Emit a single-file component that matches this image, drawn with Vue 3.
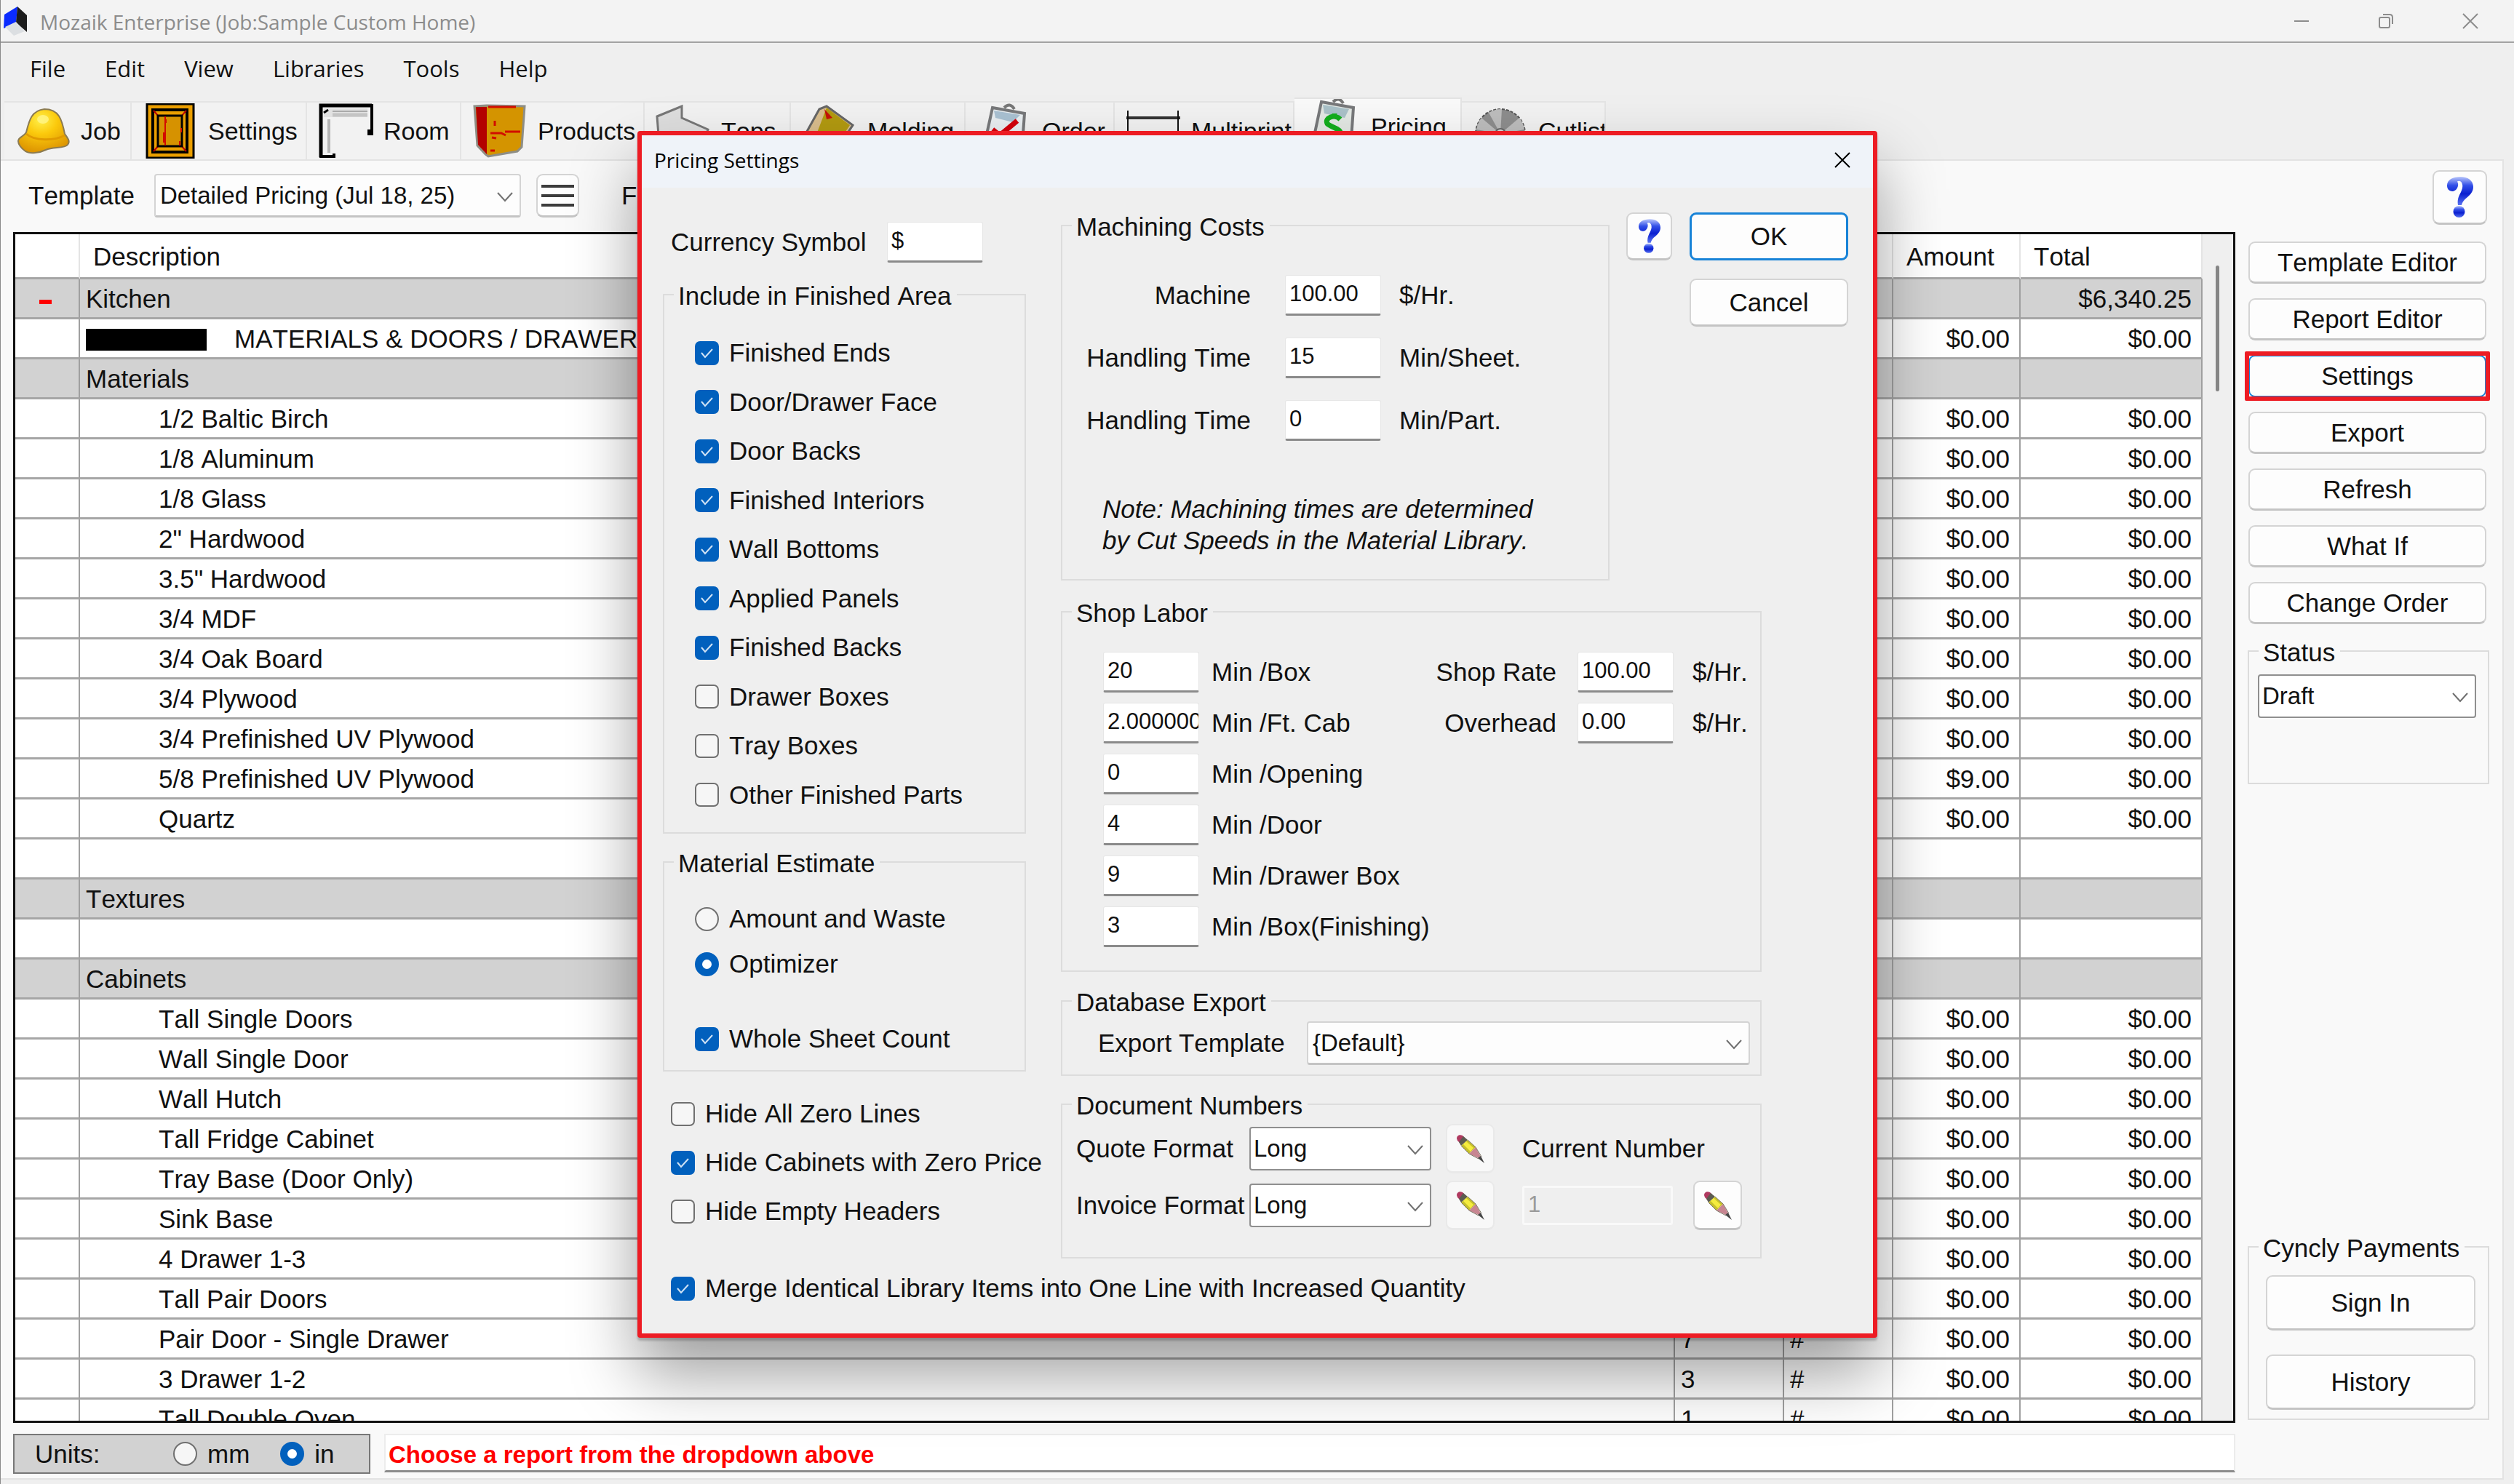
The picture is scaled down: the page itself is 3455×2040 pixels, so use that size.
<script setup>
import { ref } from 'vue'

const menus = ['File', 'Edit', 'View', 'Libraries', 'Tools', 'Help']

const tabs = [
  { id: 'job', label: 'Job', w: 175 },
  { id: 'settings', label: 'Settings', w: 241 },
  { id: 'room', label: 'Room', w: 212 },
  { id: 'products', label: 'Products', w: 252 },
  { id: 'tops', label: 'Tops', w: 201 },
  { id: 'molding', label: 'Molding', w: 240 },
  { id: 'order', label: 'Order', w: 205 },
  { id: 'multiprint', label: 'Multiprint', w: 247 },
  { id: 'pricing', label: 'Pricing', w: 230, active: true },
  { id: 'cutlist', label: 'Cutlist', w: 198 },
]

const zero = '$0.00'
const item = (text, more = {}) => ({ text, indent: true, amount: zero, total: zero, ...more })
const group = (text, more = {}) => ({ text, group: true, ...more })
const rows = [
  group('Kitchen', { mark: true, total: '$6,340.25' }),
  { text: 'MATERIALS & DOORS / DRAWERS', swatch: true, amount: zero, total: zero },
  group('Materials'),
  item('1/2 Baltic Birch'),
  item('1/8 Aluminum'),
  item('1/8 Glass'),
  item('2" Hardwood'),
  item('3.5" Hardwood'),
  item('3/4 MDF'),
  item('3/4 Oak Board'),
  item('3/4 Plywood'),
  item('3/4 Prefinished UV Plywood'),
  item('5/8 Prefinished UV Plywood', { amount: '$9.00' }),
  item('Quartz'),
  {},
  group('Textures'),
  {},
  group('Cabinets'),
  item('Tall Single Doors'),
  item('Wall Single Door'),
  item('Wall Hutch'),
  item('Tall Fridge Cabinet'),
  item('Tray Base (Door Only)'),
  item('Sink Base'),
  item('4 Drawer 1-3'),
  item('Tall Pair Doors'),
  item('Pair Door - Single Drawer', { qty: '7', unit: '#' }),
  item('3 Drawer 1-2', { qty: '3', unit: '#' }),
  item('Tall Double Oven', { qty: '1', unit: '#' }),
]

const sideButtons = ['Template Editor', 'Report Editor', 'Settings', 'Export', 'Refresh', 'What If', 'Change Order']

const finished = ref([
  { label: 'Finished Ends', on: true },
  { label: 'Door/Drawer Face', on: true },
  { label: 'Door Backs', on: true },
  { label: 'Finished Interiors', on: true },
  { label: 'Wall Bottoms', on: true },
  { label: 'Applied Panels', on: true },
  { label: 'Finished Backs', on: true },
  { label: 'Drawer Boxes', on: false },
  { label: 'Tray Boxes', on: false },
  { label: 'Other Finished Parts', on: false },
])
const hides = ref([
  { label: 'Hide All Zero Lines', on: false },
  { label: 'Hide Cabinets with Zero Price', on: true },
  { label: 'Hide Empty Headers', on: false },
])
const estimate = ref('optimizer')
const wholeSheet = ref(true)
const merge = ref(true)
const units = ref('in')
const currency = ref('$')

const machining = ref([
  { id: 'machine', label: 'Machine', value: '100.00', unit: '$/Hr.' },
  { id: 'sheet', label: 'Handling Time', value: '15', unit: 'Min/Sheet.' },
  { id: 'part', label: 'Handling Time', value: '0', unit: 'Min/Part.' },
])
const labor = ref([
  { id: 'box', label: 'Min /Box', value: '20' },
  { id: 'cab', label: 'Min /Ft. Cab', value: '2.000000' },
  { id: 'opening', label: 'Min /Opening', value: '0' },
  { id: 'door', label: 'Min /Door', value: '4' },
  { id: 'drawer', label: 'Min /Drawer Box', value: '9' },
  { id: 'finishing', label: 'Min /Box(Finishing)', value: '3' },
])
const rates = ref([
  { id: 'rate', label: 'Shop Rate', value: '100.00' },
  { id: 'overhead', label: 'Overhead', value: '0.00' },
])
</script>

<template>
  <div class="window">
    <svg width="0" height="0" class="defs" aria-hidden="true">
      <defs>
        <linearGradient id="blue" x1="0" y1="0" x2="0" y2="1">
          <stop offset="0" stop-color="#b9c6fb" />
          <stop offset="0.3" stop-color="#3350e8" />
          <stop offset="0.6" stop-color="#0a1fd0" />
          <stop offset="1" stop-color="#5a74f2" />
        </linearGradient>
        <radialGradient id="hat" cx="0.45" cy="0.25" r="0.8">
          <stop offset="0" stop-color="#fff04a" />
          <stop offset="0.4" stop-color="#fbc90c" />
          <stop offset="1" stop-color="#d98e00" />
        </radialGradient>
        <symbol id="question" viewBox="0 0 36 56">
          <path
            d="M8 20C2 20 0 16 0 12C0 4 8 0 18.500 0C29 0 36 5.500 36 14C36 20 32.500 24 28 28C23 32 21 35 20 39H15C14 33 15 29 17.500 24C20 19 22 15 21 10.500C20 6 16.500 5 14 6.500C17 11 14 19 8 20Z"
            fill="url(#blue)"
          />
          <circle cx="16.500" cy="48" r="8" fill="url(#blue)" />
        </symbol>
        <symbol id="pencil" viewBox="0 0 40 40">
          <path d="M1 6C1 2 5 0 9 2L12 5L5 12L2 9Z" fill="#b03a60" />
          <path d="M10 3L16 8L7 16L4 11Z" fill="#5c5b50" />
          <path d="M16 8L27 18L18 27L7 16Z" fill="#c5c02c" />
          <path d="M14 10L24 19L20 24L10 14Z" fill="#f5ec3e" />
          <path d="M27 18L34 31L31 33L18 27Z" fill="#c78591" />
          <path d="M34 30L39 40L30 33Z" fill="#454545" />
          <path d="M7 16L18 27L31 34M16 8L27 18L35 31" fill="none" stroke="#7b7464" stroke-width="1" />
        </symbol>
        <symbol id="chevron" viewBox="0 0 22 14">
          <path d="M1 1L11 12L21 1" fill="none" stroke="#707070" stroke-width="2" />
        </symbol>
      </defs>
    </svg>

    <header class="titlebar">
      <svg class="logo" viewBox="0 0 34 40">
        <path d="M2 11L20 0L18 24L1 30Z" fill="#0a2bff" />
        <path d="M20 0L33 12V35L18 22Z" fill="#1c1c1c" />
        <path d="M3 28L18 21L30 34L15 40Z" fill="#dcdfe2" />
      </svg>
      <span class="app-title">Mozaik Enterprise (Job:Sample Custom Home)</span>
      <div class="caption-buttons">
        <button aria-label="Minimize"><svg viewBox="0 0 20 20"><path d="M0 10H20" /></svg></button>
        <button aria-label="Restore">
          <svg viewBox="0 0 20 20"><rect x="1" y="5" width="14" height="14" rx="2" /><path d="M6 1H15Q19 1 19 5V14" /></svg>
        </button>
        <button aria-label="Close"><svg viewBox="0 0 20 20"><path d="M0 0L20 20M20 0L0 20" /></svg></button>
      </div>
    </header>

    <nav class="menubar">
      <button v-for="m in menus" :key="m">{{ m }}</button>
    </nav>

    <nav class="tabs">
      <button v-for="t in tabs" :key="t.id" :class="['tab', { active: t.active }]" :style="{ width: t.w + 'px' }">
        <svg v-if="t.id === 'job'" class="tab-icon" viewBox="0 0 76 76">
          <path d="M4 52C4 46 12 46 15 40C19 24 22 10 40 8C60 8 64 22 68 42C72 48 76 52 72 57C68 62 52 60 42 64C34 68 20 70 14 66C8 62 4 56 4 52Z" fill="url(#hat)" stroke="#8b7b52" stroke-width="2" />
          <path d="M15 42C26 52 54 52 68 44" fill="none" stroke="#e09a00" stroke-width="3" />
          <ellipse cx="38" cy="22" rx="8" ry="6" fill="#fff58a" opacity="0.8" />
        </svg>
        <svg v-else-if="t.id === 'settings'" class="tab-icon" viewBox="0 0 76 76">
          <rect x="6" y="1" width="64" height="74" fill="#eb9f00" stroke="#000" stroke-width="3" />
          <rect x="14" y="9" width="47" height="58" fill="#eb9f00" stroke="#000" stroke-width="4" />
          <path d="M15 10L22 18M60 10L53 18M15 66L22 58M60 66L53 58" stroke="#b00" stroke-width="2" />
          <rect x="21" y="17" width="33" height="42" fill="#d69200" stroke="#000" stroke-width="3" />
          <path d="M31 18V58M32 22V27M29 40V54M53 34V40M51 52V58" stroke="#d30b00" stroke-width="2" />
        </svg>
        <svg v-else-if="t.id === 'room'" class="tab-icon" viewBox="0 0 76 76">
          <path d="M4 74V3H74" fill="none" stroke="#000" stroke-width="5" />
          <path d="M74 1V42H70V36M2 73H22V69" fill="none" stroke="#000" stroke-width="4" />
          <rect x="8" y="7" width="60" height="12" fill="#e2e2e2" />
          <path d="M20 11H68" stroke="#aaa" stroke-width="2" />
          <path d="M20 16H68" stroke="#c4c4c4" stroke-width="5" />
          <path d="M15 22V68" stroke="#b5b5b5" stroke-width="4" />
          <path d="M8 13L14 9" stroke="#000" stroke-width="3" />
        </svg>
        <svg v-else-if="t.id === 'products'" class="tab-icon" viewBox="0 0 76 76">
          <path d="M3 4L20 3L72 4L68 60L62 66L22 73L18 70L7 58Z" fill="#d49400" stroke="#8e8e86" stroke-width="3" />
          <path d="M5 5H20V70L8 57Z" fill="#b30000" />
          <path d="M22 5H60M31 24V31M25 41H40L46 44M45 39H66M27 47L33 48M25 65H31" fill="none" stroke="#d10d00" stroke-width="3" />
        </svg>
        <svg v-else-if="t.id === 'tops'" class="tab-icon" viewBox="0 0 76 76">
          <path d="M2 18L36 4V20L72 36L68 50L30 66L4 44Z" fill="#dedede" stroke="#777" stroke-width="3" />
        </svg>
        <svg v-else-if="t.id === 'molding'" class="tab-icon" viewBox="0 0 76 76">
          <path d="M4 44L24 8L34 4L70 30L50 60L4 60Z" fill="#d9bd8d" stroke="#666" stroke-width="3" />
          <path d="M34 6L66 30L54 48H18Z" fill="#b29a10" />
          <path d="M31 8L42 20L34 22Z" fill="#c51208" />
        </svg>
        <svg v-else-if="t.id === 'order'" class="tab-icon" viewBox="0 0 76 76">
          <path d="M22 6L66 14L62 70H8Z" fill="#e9eef1" stroke="#77787a" stroke-width="4" />
          <path d="M24 10L60 16L50 26L26 20Z" fill="#a9c1d2" />
          <path d="M38 6Q46 -2 52 8" fill="none" stroke="#777" stroke-width="4" />
          <path d="M22 36L32 44L56 24" fill="none" stroke="#d3000b" stroke-width="7" />
        </svg>
        <svg v-else-if="t.id === 'multiprint'" class="tab-icon" viewBox="0 0 76 76">
          <path d="M1 20H75" stroke="#333" stroke-width="4" />
          <path d="M3 10V70M72 10V70" stroke="#111" stroke-width="2" />
        </svg>
        <svg v-else-if="t.id === 'pricing'" class="tab-icon" viewBox="0 0 76 76">
          <path d="M22 4L66 12L62 70H8Z" fill="#e3e8e4" stroke="#77787a" stroke-width="4" />
          <path d="M24 8L60 14L54 26L26 20Z" fill="#a9c1c8" />
          <path d="M38 4Q46 -4 52 6" fill="none" stroke="#777" stroke-width="4" />
          <path d="M48 28C40 20 26 26 30 34C36 40 52 40 48 52M40 20V26" fill="none" stroke="#12ad1c" stroke-width="7" />
        </svg>
        <svg v-else class="tab-icon" viewBox="0 0 76 76">
          <circle cx="38" cy="42" r="34" fill="#8d8d8d" stroke="#555" stroke-width="2" stroke-dasharray="4 2" />
          <path d="M38 42L22 13A34 34 0 0 1 40 8ZM38 42L64 20A34 34 0 0 1 71 36ZM38 42L5 36A34 34 0 0 1 12 20Z" fill="#bdbdbd" />
          <circle cx="38" cy="42" r="7" fill="#ddd" stroke="#666" stroke-width="2" />
        </svg>
        <span>{{ t.label }}</span>
      </button>
    </nav>

    <main class="panel">
      <section class="report">
        <div class="toolbar">
          <label for="template">Template</label>
          <span class="picker template-picker">
            <select id="template"><option>Detailed Pricing (Jul 18, 25)</option></select>
            <svg class="chevron"><use href="#chevron" /></svg>
          </span>
          <button class="btn burger" aria-label="Template menu"><i></i><i></i><i></i></button>
          <span class="filter">Filter</span>
        </div>

        <div class="grid">
          <div class="grid-body">
            <table>
              <colgroup>
                <col class="c-mark" /><col /><col class="c-qty" /><col class="c-unit" /><col class="c-amount" /><col class="c-total" />
              </colgroup>
              <thead>
                <tr><th></th><th>Description</th><th></th><th></th><th>Amount</th><th>Total</th></tr>
              </thead>
              <tbody>
                <tr v-for="(r, i) in rows" :key="i" :class="{ group: r.group }">
                  <td><span v-if="r.mark" class="minus"></span></td>
                  <td :class="{ indent: r.indent }"><span v-if="r.swatch" class="swatch"></span>{{ r.text }}</td>
                  <td>{{ r.qty }}</td>
                  <td>{{ r.unit }}</td>
                  <td class="num">{{ r.amount }}</td>
                  <td class="num">{{ r.total }}</td>
                </tr>
              </tbody>
            </table>
          </div>
          <div class="scrollbar"><i></i></div>
        </div>

        <footer class="status">
          <div class="units">
            <span>Units:</span>
            <label class="check"><input v-model="units" type="radio" name="units" value="mm" />mm</label>
            <label class="check"><input v-model="units" type="radio" name="units" value="in" />in</label>
          </div>
          <output class="message">Choose a report from the dropdown above</output>
        </footer>
      </section>

      <aside class="side">
        <button class="btn help" aria-label="Help"><svg><use href="#question" /></svg></button>
        <div class="side-buttons">
          <button v-for="b in sideButtons" :key="b" :class="['btn', { current: b === 'Settings' }]">{{ b }}</button>
        </div>
        <fieldset class="state">
          <legend>Status</legend>
          <span class="picker dark">
            <select aria-label="Status"><option>Draft</option></select>
            <svg class="chevron"><use href="#chevron" /></svg>
          </span>
        </fieldset>
        <fieldset class="payments">
          <legend>Cyncly Payments</legend>
          <button class="btn">Sign In</button>
          <button class="btn">History</button>
        </fieldset>
      </aside>
    </main>

    <div class="overlay">
      <div class="dialog" role="dialog" aria-labelledby="dialog-title">
        <div class="dialog-title">
          <span id="dialog-title">Pricing Settings</span>
          <button aria-label="Close dialog"><svg viewBox="0 0 20 20"><path d="M0 0L20 20M20 0L0 20" /></svg></button>
        </div>

        <div class="dialog-body">
          <div class="left">
            <div class="currency">
              <label for="currency">Currency Symbol</label>
              <input id="currency" v-model="currency" class="box" type="text" />
            </div>
            <fieldset class="include">
              <legend>Include in Finished Area</legend>
              <div class="check-list">
                <label v-for="f in finished" :key="f.label" class="check"><input v-model="f.on" type="checkbox" />{{ f.label }}</label>
              </div>
            </fieldset>
            <fieldset class="estimate">
              <legend>Material Estimate</legend>
              <label class="check"><input v-model="estimate" type="radio" name="estimate" value="amount" />Amount and Waste</label>
              <label class="check"><input v-model="estimate" type="radio" name="estimate" value="optimizer" />Optimizer</label>
              <label class="check sheet"><input v-model="wholeSheet" type="checkbox" />Whole Sheet Count</label>
            </fieldset>
            <div class="hides">
              <label v-for="h in hides" :key="h.label" class="check"><input v-model="h.on" type="checkbox" />{{ h.label }}</label>
            </div>
          </div>

          <div class="right">
            <div class="top-row">
              <fieldset class="machining">
                <legend>Machining Costs</legend>
                <div v-for="m in machining" :key="m.id" class="machine-row">
                  <label :for="m.id">{{ m.label }}</label>
                  <input :id="m.id" v-model="m.value" class="box" type="text" />
                  <span>{{ m.unit }}</span>
                </div>
                <p class="note">Note: Machining times are determined<br />by Cut Speeds in the Material Library.</p>
              </fieldset>
              <button class="btn dialog-help" aria-label="Dialog help"><svg><use href="#question" /></svg></button>
              <div class="actions">
                <button class="btn primary">OK</button>
                <button class="btn">Cancel</button>
              </div>
            </div>

            <fieldset class="labor">
              <legend>Shop Labor</legend>
              <div class="labor-times">
                <div v-for="l in labor" :key="l.id" class="labor-row">
                  <input :id="l.id" v-model="l.value" class="box" type="text" />
                  <label :for="l.id">{{ l.label }}</label>
                </div>
              </div>
              <div class="labor-rates">
                <div v-for="r in rates" :key="r.id" class="rate-row">
                  <label :for="r.id">{{ r.label }}</label>
                  <input :id="r.id" v-model="r.value" class="box" type="text" />
                  <span>$/Hr.</span>
                </div>
              </div>
            </fieldset>

            <fieldset class="export">
              <legend>Database Export</legend>
              <label for="export">Export Template</label>
              <span class="picker">
                <select id="export"><option>{Default}</option></select>
                <svg class="chevron"><use href="#chevron" /></svg>
              </span>
            </fieldset>

            <fieldset class="documents">
              <legend>Document Numbers</legend>
              <div class="doc-row">
                <label for="quote">Quote Format</label>
                <span class="picker dark">
                  <select id="quote"><option>Long</option></select>
                  <svg class="chevron"><use href="#chevron" /></svg>
                </span>
                <button class="btn edit" disabled aria-label="Edit quote format"><svg><use href="#pencil" /></svg></button>
                <label for="current">Current Number</label>
              </div>
              <div class="doc-row">
                <label for="invoice">Invoice Format</label>
                <span class="picker dark">
                  <select id="invoice"><option>Long</option></select>
                  <svg class="chevron"><use href="#chevron" /></svg>
                </span>
                <button class="btn edit" disabled aria-label="Edit invoice format"><svg><use href="#pencil" /></svg></button>
                <input id="current" class="box off" type="text" value="1" disabled />
                <button class="btn edit" aria-label="Edit current number"><svg><use href="#pencil" /></svg></button>
              </div>
            </fieldset>
          </div>
        </div>

        <label class="check merge"><input v-model="merge" type="checkbox" />Merge Identical Library Items into One Line with Increased Quantity</label>
      </div>
    </div>
  </div>
</template>

<style>
body {
  margin: 0;
}
</style>

<style scoped>
.window,
.window * {
  box-sizing: border-box;
}
.window {
  position: relative;
  display: flex;
  flex-direction: column;
  height: 100vh;
  overflow: hidden;
  background: #efefef;
  border-left: 1px solid #8a8a8a;
  color: #111;
  font: 35px/40px 'Liberation Sans', Arial, sans-serif;
  font-kerning: none;
  white-space: nowrap;
}
.defs {
  position: absolute;
}
button,
input,
select {
  font: inherit;
  font-kerning: none;
  color: inherit;
  margin: 0;
}
button {
  padding: 0;
  border: 0;
  background: none;
}

/* title bar */
.titlebar {
  display: flex;
  align-items: center;
  height: 59px;
  background: #f3f3f3;
  border-bottom: 2px solid #a3a3a3;
  color: #8c8c8c;
}
.logo {
  width: 34px;
  height: 40px;
  margin: 0 17px 0 3px;
}
.app-title {
  padding-top: 2px;
  font: 28px/40px 'Open Sans', sans-serif;
}
.caption-buttons {
  display: flex;
  gap: 96px;
  margin-left: auto;
  padding-right: 50px;
}
.caption-buttons button,
.dialog-title button {
  width: 20px;
  height: 20px;
}
.caption-buttons svg,
.dialog-title svg {
  display: block;
  width: 20px;
  height: 20px;
  overflow: visible;
  fill: none;
  stroke: currentColor;
  stroke-width: 2;
}

/* menu */
.menubar {
  display: flex;
  align-items: center;
  height: 75px;
  padding: 0 0 5px 13px;
}
.menubar button {
  padding: 0 27px;
  font: 31px/40px 'Open Sans', sans-serif;
}

/* tabs */
.tabs {
  display: flex;
  align-items: flex-end;
  height: 85px;
  padding-left: 5px;
}
.tab {
  display: flex;
  align-items: center;
  gap: 14px;
  flex: none;
  height: 80px;
  padding-left: 15px;
  overflow: hidden;
  background: #f2f2f2;
  border-top: 2px solid #e4e4e4;
  border-right: 2px solid #e4e4e4;
  font-size: 34px;
}
.tab.active {
  height: 85px;
  padding-bottom: 8px;
  background: #f9f9f9;
}
.tab-icon {
  flex: none;
  width: 76px;
  height: 76px;
}

/* page */
.panel {
  display: flex;
  gap: 17px;
  flex: 1;
  min-height: 0;
  margin: 0 14px 6px 0;
  padding: 0 18px 0 17px;
  background: #f9f9f9;
  border: 2px solid #e3e3e3;
  border-left: 0;
}
.report {
  display: flex;
  flex-direction: column;
  flex: 1;
  min-width: 0;
}
.toolbar {
  display: flex;
  align-items: center;
  flex: none;
  height: 98px;
  padding: 0 0 2px 21px;
}
.template-picker {
  width: 504px;
  margin: 0 21px 0 27px;
}
.filter {
  margin-left: 58px;
}

.btn {
  display: flex;
  align-items: center;
  justify-content: center;
  background: #fdfdfd;
  border: 2px solid #d4d4d4;
  border-bottom: 3px solid #c4c4c4;
  border-radius: 9px;
}
.burger {
  flex-direction: column;
  gap: 9px;
  width: 59px;
  height: 60px;
}
.burger i {
  width: 45px;
  height: 4px;
  background: #3c3c3c;
}
.picker {
  position: relative;
  display: block;
  height: 60px;
}
.picker select {
  width: 100%;
  height: 100%;
  padding: 0 40px 0 6px;
  appearance: none;
  background: #fdfdfd;
  border: 2px solid #d4d4d4;
  border-bottom: 3px solid #c4c4c4;
  border-radius: 4px;
  font-size: 33px;
}
.picker.dark select {
  padding-left: 4px;
  background: #fff;
  border: 2px solid #8f8f8f;
}
.chevron {
  position: absolute;
  right: 11px;
  top: 25px;
  width: 22px;
  height: 14px;
  pointer-events: none;
}

/* price table */
.grid {
  display: flex;
  flex: 1;
  min-height: 0;
  background: #efefef;
  border: 3px solid #111;
}
.grid-body {
  flex: 1;
  overflow: hidden;
}
table {
  width: 100%;
  table-layout: fixed;
  border-collapse: separate;
  border-spacing: 0;
  background: #fff;
}
.c-mark {
  width: 89px;
}
.c-qty,
.c-unit {
  width: 150px;
}
.c-amount {
  width: 175px;
}
.c-total {
  width: 250px;
}
th {
  height: 62px;
  padding: 2px 0 0 18px;
  text-align: left;
  font-weight: normal;
  border-right: 2px solid #e4e4e4;
  border-bottom: 3px solid #a6a6a6;
}
td {
  height: 55px;
  padding: 2px 13px 0 8px;
  border-right: 2px solid #a0a0a0;
  border-bottom: 3px solid #a6a6a6;
}
.group td {
  background: #d2d2d2;
}
td.indent {
  padding-left: 108px;
}
.num {
  text-align: right;
}
.minus {
  display: block;
  width: 17px;
  height: 6px;
  margin: 8px 0 0 25px;
  background: #f00;
}
.swatch {
  display: inline-block;
  width: 166px;
  height: 30px;
  margin-right: 38px;
  vertical-align: -4px;
  background: #000;
}
.scrollbar {
  width: 42px;
  padding: 43px 0 0 18px;
}
.scrollbar i {
  display: block;
  width: 5px;
  height: 173px;
  border-radius: 3px;
  background: #858585;
}

/* bottom bar */
.status {
  display: flex;
  gap: 19px;
  flex: none;
  padding: 15px 0 6px;
}
.units {
  display: flex;
  align-items: center;
  gap: 42px;
  width: 491px;
  height: 55px;
  padding-left: 28px;
  background: #d2d2d2;
  border: 2px solid #777;
}
.units span {
  width: 148px;
}
.message {
  flex: 1;
  height: 53px;
  padding-left: 4px;
  background: #fff;
  border: 2px solid #ececec;
  border-bottom: 3px solid #8c8c8c;
  color: #f00;
  font-size: 33px;
  font-weight: bold;
  line-height: 54px;
}

/* side column */
.side {
  display: flex;
  flex-direction: column;
  width: 332px;
  padding: 13px 0 80px;
}
.help {
  width: 75px;
  height: 75px;
  margin: 0 3px 23px auto;
}
.help svg {
  width: 36px;
  height: 56px;
}
.side-buttons {
  display: grid;
  gap: 20px;
  padding: 0 4px 0 1px;
}
.side-buttons .btn {
  height: 58px;
}
.side-buttons .current {
  position: relative;
  border: 2px solid #1883d7;
}
.side-buttons .current::after {
  content: '';
  position: absolute;
  inset: -7px;
  border: 6px solid #ed1c24;
  border-radius: 2px;
}
fieldset {
  --inset: 0px;
  min-width: 0;
  margin: 0;
  padding: 0 0 0 var(--inset);
  border: 2px solid #dcdcdc;
}
legend {
  height: 40px;
  margin-left: calc(13px - var(--inset));
  padding: 0 7px 0 6px;
  line-height: 43px;
}
.state {
  --inset: 12px;
  height: 203px;
  margin-top: 17px;
  padding-top: 12px;
  padding-right: 16px;
}
.payments {
  --inset: 23px;
  display: grid;
  gap: 33px;
  margin-top: auto;
  padding-top: 19px;
  padding-right: 17px;
  padding-bottom: 12px;
}
.payments .btn {
  height: 76px;
}

/* check boxes and radios */
.check {
  display: flex;
  align-items: center;
  height: 40px;
}
.check input {
  flex: none;
  width: 33px;
  height: 33px;
  margin-right: 14px;
  appearance: none;
  background: #f6f6f6;
  border: 2px solid #707070;
  border-radius: 7px;
}
.check input[type='radio'] {
  border-radius: 50%;
}
.check input[type='radio']:checked {
  background: #fff;
  border: 10px solid #0160bd;
}
.check input[type='checkbox']:checked {
  border-color: #0160bd;
  background: #0160bd url("data:image/svg+xml,%3Csvg xmlns='http://www.w3.org/2000/svg' viewBox='0 0 29 29'%3E%3Cpath d='M7 14L12 20L22 9' fill='none' stroke='%23cfe2f5' stroke-width='2'/%3E%3C/svg%3E") center / 29px;
}

/* dialog */
.overlay {
  position: absolute;
  inset: 0;
  display: flex;
  justify-content: center;
  align-items: flex-start;
  padding-top: 180px;
}
.dialog {
  width: 1704px;
  background: #efefef;
  border: 6px solid #ed1c24;
  border-radius: 4px;
  box-shadow: 0 4px 3px rgba(0, 0, 0, 0.2), 0 50px 90px rgba(0, 0, 0, 0.38);
}
.dialog-title {
  display: flex;
  align-items: center;
  justify-content: space-between;
  height: 72px;
  padding: 0 32px 4px 17px;
  background: #eff3f9;
  color: #000;
  font: 28px/40px 'Open Sans', sans-serif;
}
.dialog-body {
  display: flex;
  gap: 48px;
  padding: 32px 34px 0 29px;
}
.left {
  width: 499px;
  padding-top: 15px;
}
.right {
  flex: 1;
}
.box {
  width: 132px;
  height: 56px;
  padding: 0 0 3px 5px;
  background: #fff;
  border: 1px solid #e6e6e6;
  border-bottom: 3px solid #8a8a8a;
  border-radius: 3px;
  font-size: 31px;
}
.box.off {
  width: 207px;
  height: 54px;
  background: #efefef;
  border: 3px solid #f9f9f9;
  color: #9a9a9a;
}
.currency {
  display: flex;
  align-items: center;
  justify-content: space-between;
  margin: 0 59px 24px 11px;
}
.check-list {
  display: flex;
  flex-direction: column;
  justify-content: space-between;
  height: 648px;
  margin: 40px 0 31px 42px;
}
.estimate {
  --inset: 42px;
  margin-top: 19px;
  padding-top: 38px;
  padding-bottom: 23px;
}
.estimate .check + .check {
  margin-top: 22px;
}
.estimate .check.sheet {
  margin-top: 63px;
}
.hides {
  display: grid;
  gap: 27px;
  margin: 38px 0 0 11px;
}
.merge {
  margin: 21px 0 42px 40px;
}

.top-row {
  display: flex;
  align-items: flex-start;
}
.machining {
  width: 754px;
  padding-top: 18px;
  padding-bottom: 32px;
}
.machine-row {
  display: flex;
  align-items: center;
  margin-top: 30px;
}
.machine-row label {
  width: 259px;
  text-align: right;
}
.machine-row .box {
  margin: 0 25px 0 47px;
}
.note {
  margin: 72px 0 0 55px;
  font-style: italic;
  line-height: 43px;
}
.dialog-help {
  width: 63px;
  height: 66px;
  margin: 2px 24px 0 23px;
}
.dialog-help svg {
  width: 30px;
  height: 47px;
}
.actions {
  display: grid;
  gap: 25px;
  width: 218px;
  margin-top: 2px;
}
.actions .btn {
  height: 66px;
}
.actions .primary {
  border: 3px solid #1883d7;
}
.labor,
.export,
.documents {
  width: 963px;
}
.labor {
  --inset: 56px;
  display: flex;
  margin-top: 23px;
  padding-top: 35px;
  padding-bottom: 32px;
}
.labor-times {
  display: grid;
  gap: 14px;
  width: 456px;
}
.labor-rates {
  display: grid;
  gap: 14px;
  align-content: start;
}
.labor-row,
.rate-row {
  display: flex;
  align-items: center;
}
.labor-row .box {
  margin-right: 17px;
}
.rate-row label {
  width: 167px;
  text-align: right;
}
.rate-row .box {
  margin: 0 26px 0 29px;
}
.export {
  --inset: 49px;
  display: flex;
  align-items: center;
  margin-top: 20px;
  padding-top: 8px;
  padding-right: 14px;
  padding-bottom: 13px;
}
.export label {
  width: 287px;
}
.export .picker {
  flex: 1;
}
.documents {
  --inset: 19px;
  margin-top: 19px;
  padding-top: 7px;
  padding-bottom: 37px;
}
.doc-row {
  display: flex;
  align-items: center;
  height: 68px;
}
.doc-row + .doc-row {
  margin-top: 10px;
}
.doc-row label:first-child {
  width: 238px;
}
.doc-row .picker {
  width: 250px;
}
.edit {
  width: 67px;
  height: 68px;
  margin: 0 38px 0 20px;
}
.edit:last-child {
  margin: 0 0 0 28px;
}
.edit:disabled {
  background: #f8f8f8;
  border-color: #e9e9e9;
}
.edit svg {
  width: 40px;
  height: 40px;
}
</style>
